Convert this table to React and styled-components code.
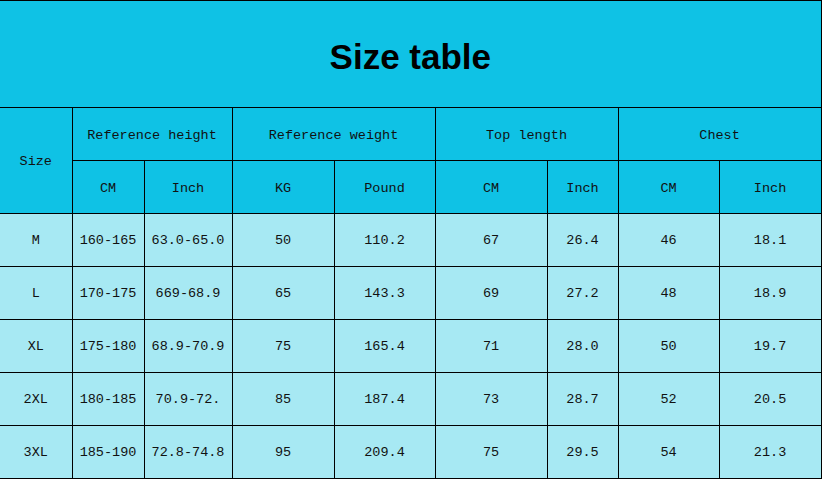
import React from 'react';
import styled, { createGlobalStyle } from 'styled-components';

const GlobalStyle = createGlobalStyle`
    html, body {
        margin: 0;
        padding: 0;
        background: #fff;
    }
`;

const widths = [72, 72, 88, 102, 101, 112, 71, 101, 102];

const rows = [
    ['M', '160-165', '63.0-65.0', '50', '110.2', '67', '26.4', '46', '18.1'],
    ['L', '170-175', '669-68.9', '65', '143.3', '69', '27.2', '48', '18.9'],
    ['XL', '175-180', '68.9-70.9', '75', '165.4', '71', '28.0', '50', '19.7'],
    ['2XL', '180-185', '70.9-72.', '85', '187.4', '73', '28.7', '52', '20.5'],
    ['3XL', '185-190', '72.8-74.8', '95', '209.4', '75', '29.5', '54', '21.3'],
];

export default function App() {
    return (
        <>
            <GlobalStyle />
            <Table>
                <colgroup>
                    {widths.map((w, i) => <col key={i} style={{ width: w }} />)}
                </colgroup>
                <tbody>
                    <tr>
                        <Title colSpan={9}>Size table</Title>
                    </tr>
                    <HeadRow>
                        <Head rowSpan={2} $first>Size</Head>
                        <Head colSpan={2}>Reference height</Head>
                        <Head colSpan={2}>Reference weight</Head>
                        <Head colSpan={2}>Top length</Head>
                        <Head colSpan={2}>Chest</Head>
                    </HeadRow>
                    <HeadRow>
                        <Head>CM</Head>
                        <Head>Inch</Head>
                        <Head>KG</Head>
                        <Head>Pound</Head>
                        <Head>CM</Head>
                        <Head>Inch</Head>
                        <Head>CM</Head>
                        <Head>Inch</Head>
                    </HeadRow>
                    {rows.map((r) => (
                        <BodyRow key={r[0]}>
                            {r.map((v, i) => <Cell key={i} $first={i === 0}>{v}</Cell>)}
                        </BodyRow>
                    ))}
                </tbody>
            </Table>
        </>
    );
}

const Table = styled.table`
    width: 821px;
    table-layout: fixed;
    border-collapse: collapse;
    border-spacing: 0;
    font-family: "Liberation Mono", "DejaVu Sans Mono", monospace;
    font-size: 13.5px;
    color: #111;
`;

const Title = styled.td`
    height: 100px;
    padding: 6px 0 0;
    background: #0fc2e5;
    border-top: 1.5px solid #000;
    border-left: 0;
    border-right: 1.5px solid #000;
    border-bottom: 1.5px solid #000;
    text-align: center;
    font-family: "Liberation Sans", Arial, sans-serif;
    font-weight: 700;
    font-size: 35px;
    color: #000;
`;

const HeadRow = styled.tr`
    height: 53px;
    background: #0fc2e5;
`;

const Head = styled.td`
    padding: 2px 0 0;
    text-align: center;
    border: 1.5px solid #000;
    border-left: ${(p) => (p.$first ? '0' : '1.5px solid #000')};
`;

const BodyRow = styled.tr`
    height: 53px;
    background: #a7e9f3;
`;

const Cell = styled.td`
    padding: 0;
    text-align: center;
    border: 1.5px solid #000;
    border-left: ${(p) => (p.$first ? '0' : '1.5px solid #000')};
`;
